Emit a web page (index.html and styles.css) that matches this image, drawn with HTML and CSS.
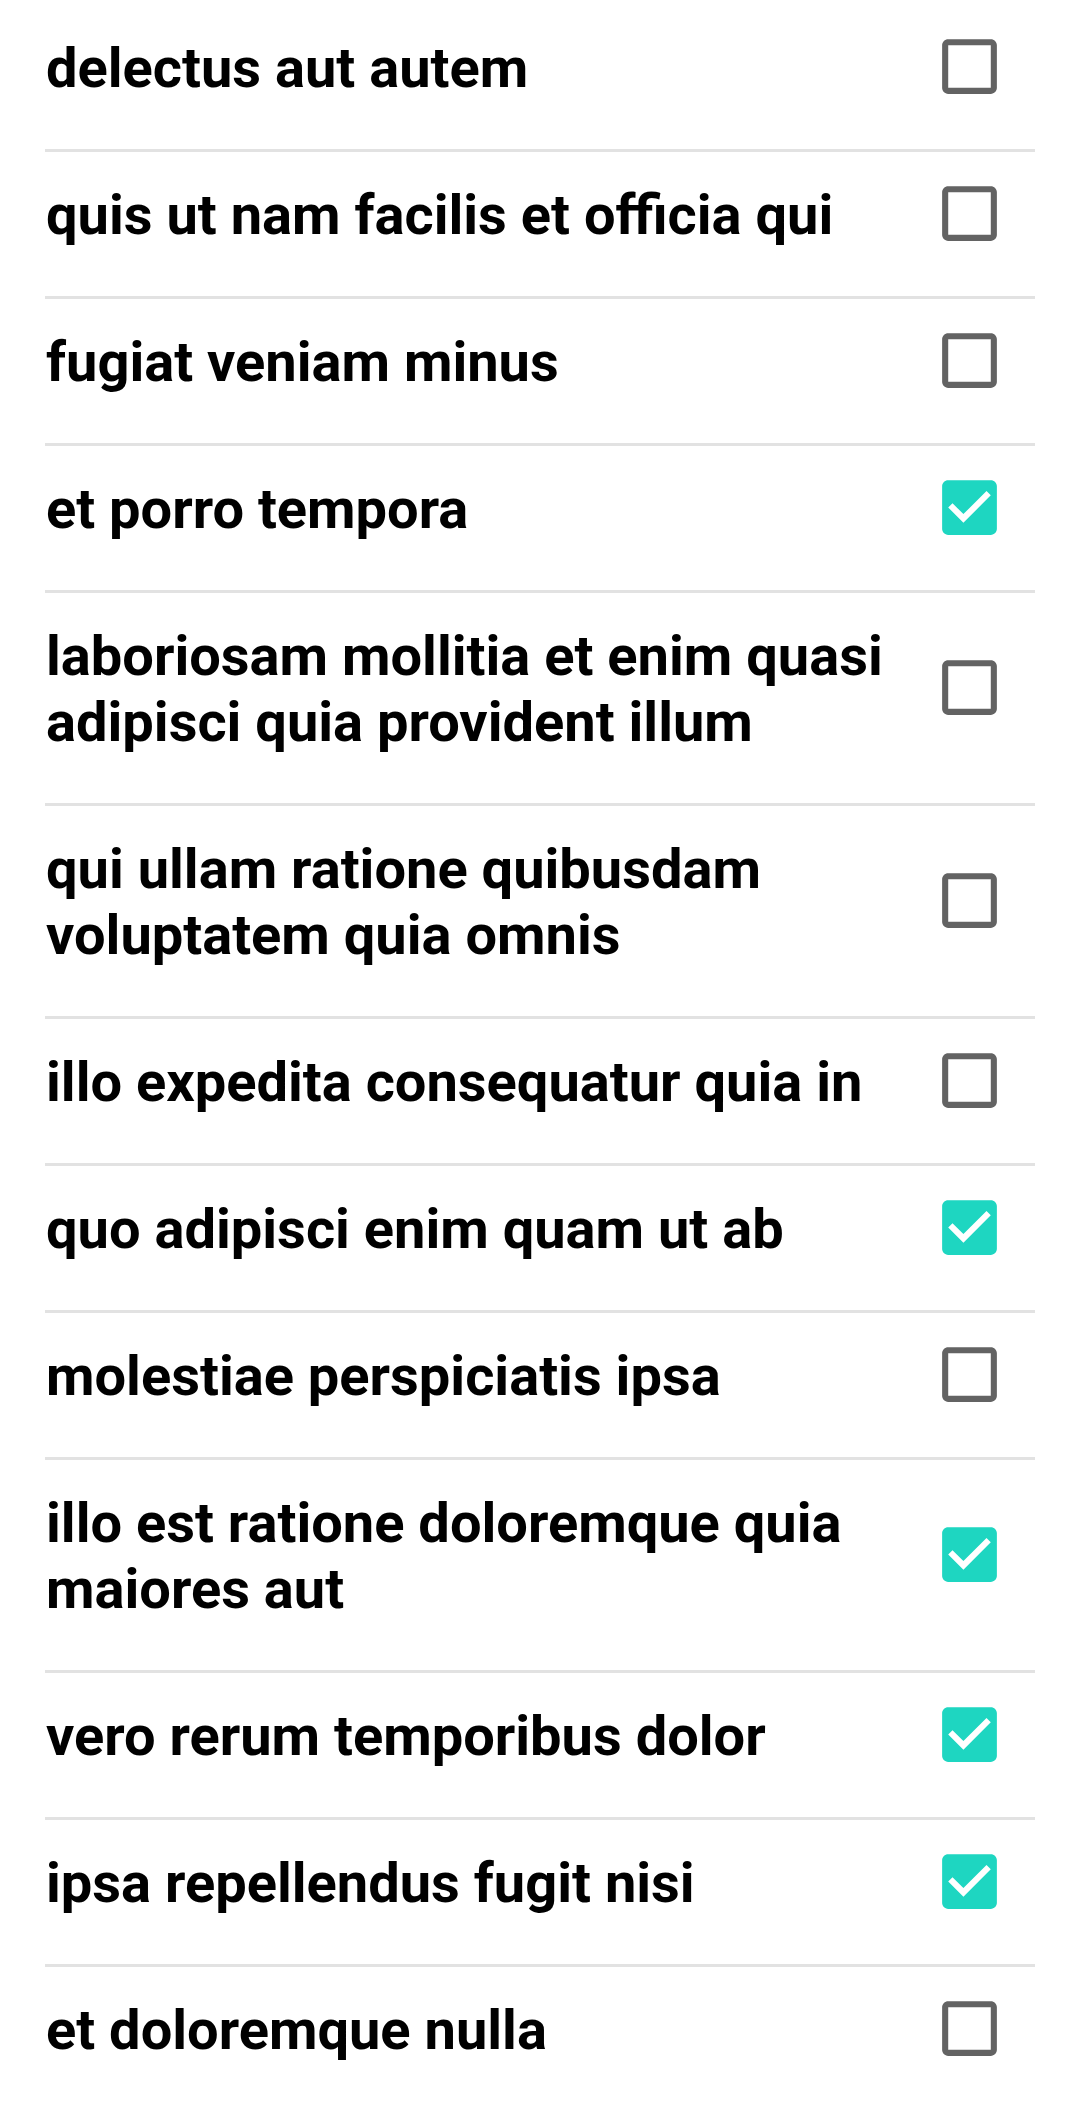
FILE: index.html
```html
<!DOCTYPE html>
<html lang="la">
<head>
<meta charset="utf-8">
<title>Todos</title>
<link rel="stylesheet" href="styles.css">
</head>
<body>
<ul class="todo-list">
  <li class="todo"><span class="todo-title">delectus aut autem</span><span class="box"><svg viewBox="0 0 24 24"><path class="off" d="M19 5v14H5V5h14m0-2H5c-1.1 0-2 .9-2 2v14c0 1.1.9 2 2 2h14c1.1 0 2-.9 2-2V5c0-1.1-.9-2-2-2z"/></svg></span></li>
  <li class="todo"><span class="todo-title">quis ut nam facilis et officia qui</span><span class="box"><svg viewBox="0 0 24 24"><path class="off" d="M19 5v14H5V5h14m0-2H5c-1.1 0-2 .9-2 2v14c0 1.1.9 2 2 2h14c1.1 0 2-.9 2-2V5c0-1.1-.9-2-2-2z"/></svg></span></li>
  <li class="todo"><span class="todo-title">fugiat veniam minus</span><span class="box"><svg viewBox="0 0 24 24"><path class="off" d="M19 5v14H5V5h14m0-2H5c-1.1 0-2 .9-2 2v14c0 1.1.9 2 2 2h14c1.1 0 2-.9 2-2V5c0-1.1-.9-2-2-2z"/></svg></span></li>
  <li class="todo"><span class="todo-title">et porro tempora</span><span class="box"><svg viewBox="0 0 24 24"><path class="on" d="M19 3H5c-1.11 0-2 .9-2 2v14c0 1.1.89 2 2 2h14c1.11 0 2-.9 2-2V5c0-1.1-.89-2-2-2zm-9 14l-5-5 1.41-1.41L10 14.17l7.59-7.59L19 8l-9 9z"/></svg></span></li>
  <li class="todo"><span class="todo-title">laboriosam mollitia et enim quasi adipisci quia provident illum</span><span class="box"><svg viewBox="0 0 24 24"><path class="off" d="M19 5v14H5V5h14m0-2H5c-1.1 0-2 .9-2 2v14c0 1.1.9 2 2 2h14c1.1 0 2-.9 2-2V5c0-1.1-.9-2-2-2z"/></svg></span></li>
  <li class="todo"><span class="todo-title">qui ullam ratione quibusdam voluptatem quia omnis</span><span class="box"><svg viewBox="0 0 24 24"><path class="off" d="M19 5v14H5V5h14m0-2H5c-1.1 0-2 .9-2 2v14c0 1.1.9 2 2 2h14c1.1 0 2-.9 2-2V5c0-1.1-.9-2-2-2z"/></svg></span></li>
  <li class="todo"><span class="todo-title">illo expedita consequatur quia in</span><span class="box"><svg viewBox="0 0 24 24"><path class="off" d="M19 5v14H5V5h14m0-2H5c-1.1 0-2 .9-2 2v14c0 1.1.9 2 2 2h14c1.1 0 2-.9 2-2V5c0-1.1-.9-2-2-2z"/></svg></span></li>
  <li class="todo"><span class="todo-title">quo adipisci enim quam ut ab</span><span class="box"><svg viewBox="0 0 24 24"><path class="on" d="M19 3H5c-1.11 0-2 .9-2 2v14c0 1.1.89 2 2 2h14c1.11 0 2-.9 2-2V5c0-1.1-.89-2-2-2zm-9 14l-5-5 1.41-1.41L10 14.17l7.59-7.59L19 8l-9 9z"/></svg></span></li>
  <li class="todo"><span class="todo-title">molestiae perspiciatis ipsa</span><span class="box"><svg viewBox="0 0 24 24"><path class="off" d="M19 5v14H5V5h14m0-2H5c-1.1 0-2 .9-2 2v14c0 1.1.9 2 2 2h14c1.1 0 2-.9 2-2V5c0-1.1-.9-2-2-2z"/></svg></span></li>
  <li class="todo"><span class="todo-title">illo est ratione doloremque quia maiores aut</span><span class="box"><svg viewBox="0 0 24 24"><path class="on" d="M19 3H5c-1.11 0-2 .9-2 2v14c0 1.1.89 2 2 2h14c1.11 0 2-.9 2-2V5c0-1.1-.89-2-2-2zm-9 14l-5-5 1.41-1.41L10 14.17l7.59-7.59L19 8l-9 9z"/></svg></span></li>
  <li class="todo"><span class="todo-title">vero rerum temporibus dolor</span><span class="box"><svg viewBox="0 0 24 24"><path class="on" d="M19 3H5c-1.11 0-2 .9-2 2v14c0 1.1.89 2 2 2h14c1.11 0 2-.9 2-2V5c0-1.1-.89-2-2-2zm-9 14l-5-5 1.41-1.41L10 14.17l7.59-7.59L19 8l-9 9z"/></svg></span></li>
  <li class="todo"><span class="todo-title">ipsa repellendus fugit nisi</span><span class="box"><svg viewBox="0 0 24 24"><path class="on" d="M19 3H5c-1.11 0-2 .9-2 2v14c0 1.1.89 2 2 2h14c1.11 0 2-.9 2-2V5c0-1.1-.89-2-2-2zm-9 14l-5-5 1.41-1.41L10 14.17l7.59-7.59L19 8l-9 9z"/></svg></span></li>
  <li class="todo"><span class="todo-title">et doloremque nulla</span><span class="box"><svg viewBox="0 0 24 24"><path class="off" d="M19 5v14H5V5h14m0-2H5c-1.1 0-2 .9-2 2v14c0 1.1.9 2 2 2h14c1.1 0 2-.9 2-2V5c0-1.1-.9-2-2-2z"/></svg></span></li>
</ul>
</body>
</html>
```

FILE: styles.css
```css
html, body {
  margin: 0;
  padding: 0;
  background: #ffffff;
}

body {
  font-family: Roboto, "Noto Sans", "Liberation Sans", sans-serif;
  color: #000000;
}

.todo-list {
  list-style: none;
  margin: 0;
  padding: 5px 38px 0 45px;
}

.todo {
  display: flex;
  align-items: center;
  padding: 31px 0 47.5px 0;
  border-bottom: 3px solid #e2e2e2;
}

.todo-title {
  flex: 1;
  font-size: 56px;
  font-weight: 700;
  line-height: 65.6px;
  padding-left: 1px;
}

.box {
  flex: none;
  width: 73px;
  height: 73px;
  margin: -8.5px 29px -3.5px 20px;
  display: flex;
}

.box svg {
  width: 73px;
  height: 73px;
  display: block;
}

.off {
  fill: #636363;
}

.on {
  fill: #1ed6c1;
}
```
